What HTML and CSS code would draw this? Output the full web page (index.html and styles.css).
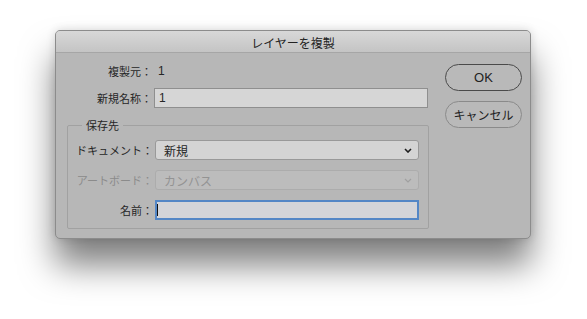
FILE: index.html
```html
<!DOCTYPE html>
<html lang="ja">

<head>
    <meta charset="UTF-8">
    <meta name="viewport" content="width=device-width, initial-scale=1.0">
    <title>レイヤーを複製</title>
    <link rel="stylesheet" href="styles.css">
</head>

<body>
    <div class="dialog">
        <div class="titlebar">レイヤーを複製</div>
        <div class="dialog-body">
            <div class="form">
                <div class="row row-text">
                    <span class="label">複製元：</span>
                    <span class="value">1</span>
                </div>
                <div class="row top-field">
                    <span class="label">新規名称：</span>
                    <div class="field">1</div>
                </div>
                <fieldset class="group">
                    <legend>保存先</legend>
                    <div class="row">
                        <span class="label">ドキュメント：</span>
                        <div class="select">
                            <span>新規</span>
                            <svg class="chevron" width="8" height="5" viewBox="0 0 8 5"><path d="M1 1 L4 4 L7 1" fill="none" stroke="#1e1e1e" stroke-width="1.6"/></svg>
                        </div>
                    </div>
                    <div class="row disabled">
                        <span class="label">アートボード：</span>
                        <div class="select">
                            <span>カンバス</span>
                            <svg class="chevron" width="8" height="5" viewBox="0 0 8 5"><path d="M1 1 L4 4 L7 1" fill="none" stroke="#a0a0a0" stroke-width="1.2"/></svg>
                        </div>
                    </div>
                    <div class="row">
                        <span class="label">名前：</span>
                        <div class="field focused"></div>
                    </div>
                </fieldset>
            </div>
            <div class="buttons">
                <button class="btn btn-default">OK</button>
                <button class="btn">キャンセル</button>
            </div>
        </div>
    </div>
</body>

</html>
```

FILE: styles.css
```css
html {
    height: 100%;
    background-color: #fff;
}

body {
    box-sizing: border-box;
    min-height: 100%;
    margin: 0;
    padding: 30px 0 0 55px;
    font-family: "Noto Sans CJK JP", "Liberation Sans", sans-serif;
    font-size: 11px;
    color: #262626;
}

.dialog {
    width: 474px;
    border: 1px solid #8c8c8c;
    border-radius: 5px;
    background-color: #b7b7b7;
    box-shadow: 0 26px 34px rgba(0, 0, 0, 0.5), 0 0 10px rgba(0, 0, 0, 0.14);
    overflow: hidden;
}

.titlebar {
    height: 21px;
    line-height: 23px;
    border-bottom: 1px solid #a6a6a6;
    background: linear-gradient(#d8d8d8, #c4c4c4);
    text-align: center;
    font-size: 12px;
    color: #222;
}

.dialog-body {
    display: flex;
    gap: 16px;
    padding: 9px 8px 9px 11px;
}

.form {
    width: 362px;
}

.row {
    display: grid;
    grid-template-columns: 85px 1fr;
    column-gap: 2px;
    align-items: center;
}

.row-text {
    height: 18px;
}

.label {
    text-align: right;
    white-space: nowrap;
}

.value {
    padding-left: 4px;
    font-family: "Liberation Sans", sans-serif;
    font-size: 12px;
}

.top-field {
    margin-top: 8px;
    margin-right: 1px;
}

.field {
    height: 18px;
    line-height: 18px;
    padding-left: 4px;
    border: 1px solid #8f8f8f;
    background-color: #d6d6d6;
    font-family: "Liberation Sans", sans-serif;
    font-size: 12px;
}

.group {
    margin: 10px 0 0;
    padding: 8px 9px 8px 0;
    border: 1px solid #a1a1a1;
    border-radius: 2px;
}

.group legend {
    margin-left: 14px;
    padding: 0 4px;
    line-height: 14px;
    font-size: 11px;
}

.group .row + .row {
    margin-top: 10px;
}

.select {
    display: flex;
    align-items: center;
    justify-content: space-between;
    height: 18px;
    padding: 0 6px 0 8px;
    border: 1px solid #999;
    border-radius: 3px;
    background-color: #d4d4d4;
    font-size: 12px;
}

.disabled .label {
    color: #8b8b8b;
}

.disabled .select {
    border-color: #acacac;
    background-color: #bcbcbc;
    color: #939393;
}

.chevron {
    display: block;
}

.field.focused {
    position: relative;
    height: 16px;
    border: 2px solid #5386c6;
    background-color: #d3d4d9;
}

.field.focused::before {
    content: "";
    position: absolute;
    left: 0;
    top: 2px;
    width: 1px;
    height: 12px;
    background-color: #111;
}

.buttons {
    display: flex;
    flex-direction: column;
    gap: 10px;
    padding-top: 2px;
}

.btn {
    width: 77px;
    height: 27px;
    border: 1px solid #8a8a8a;
    border-radius: 14px;
    background-color: #b9b9b9;
    font-family: "Noto Sans CJK JP", "Liberation Sans", sans-serif;
    font-size: 12px;
    color: #222;
    padding: 0;
}

.btn-default {
    border-color: #4a4a4a;
    font-family: "Liberation Sans", sans-serif;
    font-size: 13px;
}
```
